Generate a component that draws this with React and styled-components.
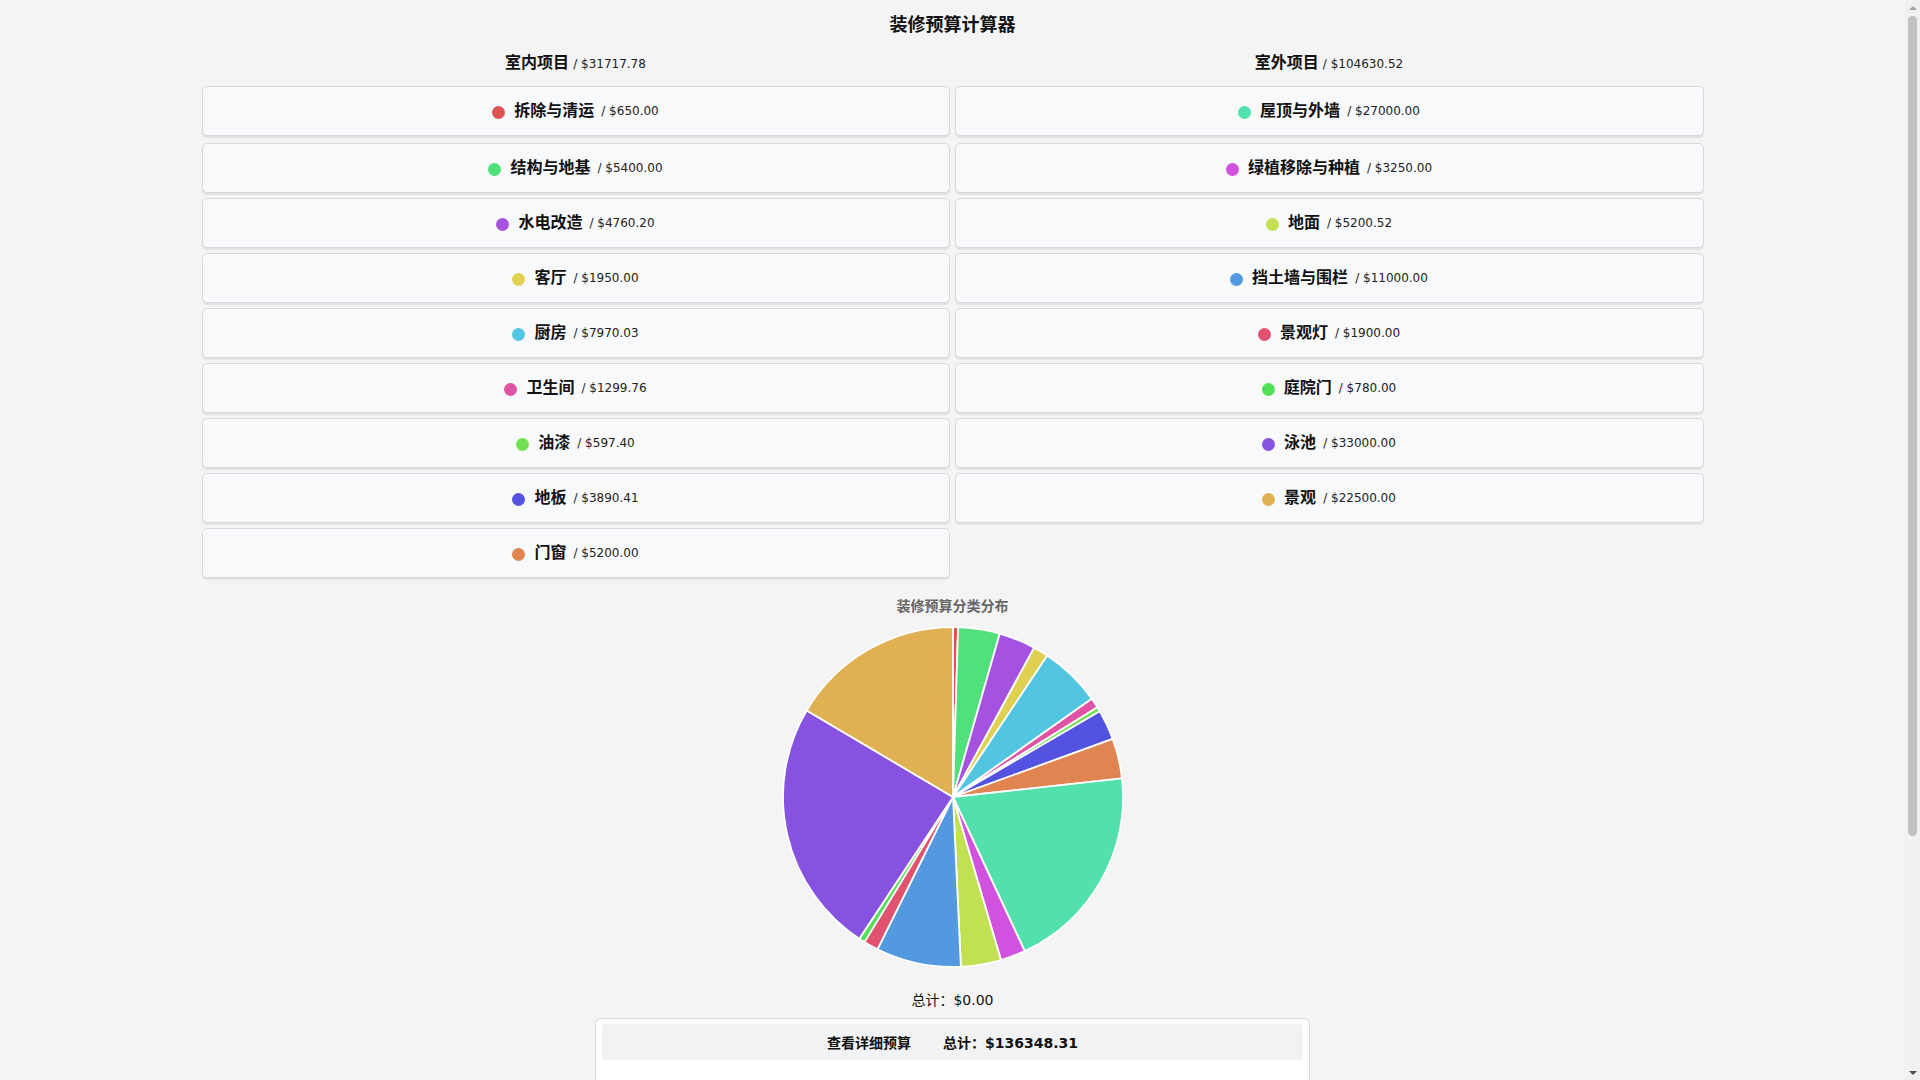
import React from "react";
import styled, { createGlobalStyle } from "styled-components";

const GlobalStyle = createGlobalStyle`
  body {
    margin: 0;
    padding-right: 15px;
    background: #f4f4f4;
    font-family: "DejaVu Sans", "Noto Sans CJK SC", sans-serif;
    color: #111;
  }
`;

const indoor = [
  { name: "拆除与清运", cost: 650, hue: 0 },
  { name: "结构与地基", cost: 5400, hue: 137 },
  { name: "水电改造", cost: 4760.2, hue: 275 },
  { name: "客厅", cost: 1950, hue: 53 },
  { name: "厨房", cost: 7970.03, hue: 191 },
  { name: "卫生间", cost: 1299.76, hue: 326 },
  { name: "油漆", cost: 597.4, hue: 106 },
  { name: "地板", cost: 3890.41, hue: 241 },
  { name: "门窗", cost: 5200, hue: 21 },
];

const outdoor = [
  { name: "屋顶与外墙", cost: 27000, hue: 158 },
  { name: "绿植移除与种植", cost: 3250, hue: 294 },
  { name: "地面", cost: 5200.52, hue: 73 },
  { name: "挡土墙与围栏", cost: 11000, hue: 210 },
  { name: "景观灯", cost: 1900, hue: 348 },
  { name: "庭院门", cost: 780, hue: 124 },
  { name: "泳池", cost: 33000, hue: 263 },
  { name: "景观", cost: 22500, hue: 40 },
];

// totals as the calculator reports them
const totals = {
  indoor: "31717.78",
  outdoor: "104630.52",
  all: "136348.31",
};

const colorOf = (hue) => `hsl(${hue}, 70%, 60%)`;
const sum = (list) => list.reduce((a, b) => a + b.cost, 0);

const Page = styled.div`
  padding: 13px 0 40px;
`;

/* the window scrollbar (the headless shot hides the real one) */
const ScrollTrack = styled.div`
  position: fixed;
  top: 0;
  right: 0;
  width: 15px;
  height: 100vh;
  background: #f1f1f1;
  display: flex;
  flex-direction: column;
  align-items: center;
`;

const ScrollArrow = styled.div`
  width: 15px;
  height: 15px;
  flex: none;
  display: flex;
  align-items: center;
  justify-content: center;
  margin-top: ${(p) => (p.$down ? "auto" : "0")};

  &::before {
    content: "";
    border-left: 4px solid transparent;
    border-right: 4px solid transparent;
    ${(p) => (p.$down ? "border-top: 4px solid #505050;" : "border-bottom: 4px solid #a3a3a3;")}
  }
`;

const ScrollThumb = styled.div`
  width: 9px;
  height: 820px;
  margin-top: 1px;
  border-radius: 5px;
  background: #c1c1c1;
`;

const Title = styled.h1`
  margin: 0;
  font-size: 18px;
  line-height: 24px;
  font-weight: bold;
  text-align: center;
`;

const Columns = styled.div`
  width: 1502px;
  margin: 14px auto 0;
  display: grid;
  grid-template-columns: 748px 749px;
  column-gap: 5px;
  align-items: start;
`;

const Column = styled.section`
  display: flex;
  flex-direction: column;
`;

const ColumnHeading = styled.div`
  text-align: center;
  line-height: 24px;
  margin-bottom: 10px;
  font-size: 16px;
  font-weight: bold;
`;

const Amount = styled.span`
  font-size: 12px;
  font-weight: normal;
  margin-left: ${(p) => p.$gap || 4}px;
  color: #222;
`;

const CardList = styled.div`
  display: flex;
  flex-direction: column;
  gap: 5px;
`;

const Card = styled.div`
  box-sizing: border-box;
  height: 50px;
  display: flex;
  align-items: center;
  justify-content: center;
  background: #f8f9fb;
  border: 1px solid #d6d9df;
  border-radius: 5px;
  box-shadow: 0 2px 1px rgba(0, 0, 0, 0.07);

  &:first-child {
    margin-bottom: 2px;
  }
`;

const Dot = styled.span`
  width: 13px;
  height: 13px;
  border-radius: 50%;
  background: ${(p) => p.$color};
  margin-right: 9px;
  margin-top: 3px;
  flex: none;
`;

const ItemName = styled.span`
  font-size: 16px;
  font-weight: bold;
  line-height: 24px;
`;

const ChartSection = styled.div`
  display: flex;
  flex-direction: column;
  align-items: center;
  margin-top: 18px;
`;

const ChartTitle = styled.div`
  font-size: 14px;
  line-height: 20px;
  font-weight: bold;
  color: #666;
`;

const PieSvg = styled.svg`
  display: block;
  margin-top: 9px;
`;

const TotalLine = styled.div`
  margin-top: 21px;
  font-size: 14px;
  line-height: 20px;
`;

const DetailBox = styled.div`
  box-sizing: border-box;
  width: 715px;
  margin: 8px auto 0;
  padding: 5px 6px 6px;
  background: #fff;
  border: 1px solid #d6d9df;
  border-radius: 6px;
`;

const DetailHeader = styled.div`
  height: 36px;
  display: flex;
  align-items: center;
  justify-content: center;
  gap: 32px;
  background: #f1f2f4;
  border-radius: 4px;
  font-size: 14px;
  font-weight: bold;
`;

const DetailBody = styled.div`
  height: 240px;
`;

const ItemCard = ({ item }) => (
  <Card>
    <Dot $color={colorOf(item.hue)} />
    <ItemName>{item.name}</ItemName>
    <Amount $gap={7}>/ ${item.cost.toFixed(2)}</Amount>
  </Card>
);

const Pie = ({ items }) => {
  const size = 344;
  const c = size / 2;
  const r = 170;
  const total = sum(items);
  let angle = -Math.PI / 2;
  const slices = items.map((it) => {
    const a0 = angle;
    const a1 = angle + (it.cost / total) * Math.PI * 2;
    angle = a1;
    const x0 = c + r * Math.cos(a0);
    const y0 = c + r * Math.sin(a0);
    const x1 = c + r * Math.cos(a1);
    const y1 = c + r * Math.sin(a1);
    const large = a1 - a0 > Math.PI ? 1 : 0;
    const d = `M${c} ${c} L${x0} ${y0} A${r} ${r} 0 ${large} 1 ${x1} ${y1} Z`;
    return <path key={it.name} d={d} fill={colorOf(it.hue)} stroke="#fff" strokeWidth="1.8" strokeLinejoin="round" />;
  });
  return (
    <PieSvg width={size} height={size} viewBox={`0 0 ${size} ${size}`}>
      {slices}
    </PieSvg>
  );
};

export default function App() {
  const all = [...indoor, ...outdoor];
  return (
    <Page>
      <GlobalStyle />
      <Title>装修预算计算器</Title>
      <Columns>
        <Column>
          <ColumnHeading>
            室内项目<Amount>/ ${totals.indoor}</Amount>
          </ColumnHeading>
          <CardList>
            {indoor.map((it) => (
              <ItemCard key={it.name} item={it} />
            ))}
          </CardList>
        </Column>
        <Column>
          <ColumnHeading>
            室外项目<Amount>/ ${totals.outdoor}</Amount>
          </ColumnHeading>
          <CardList>
            {outdoor.map((it) => (
              <ItemCard key={it.name} item={it} />
            ))}
          </CardList>
        </Column>
      </Columns>
      <ChartSection>
        <ChartTitle>装修预算分类分布</ChartTitle>
        <Pie items={all} />
        <TotalLine>总计：$0.00</TotalLine>
      </ChartSection>
      <DetailBox>
        <DetailHeader>
          <span>查看详细预算</span>
          <span>总计：${totals.all}</span>
        </DetailHeader>
        <DetailBody />
      </DetailBox>
      <ScrollTrack>
        <ScrollArrow />
        <ScrollThumb />
        <ScrollArrow $down />
      </ScrollTrack>
    </Page>
  );
}
